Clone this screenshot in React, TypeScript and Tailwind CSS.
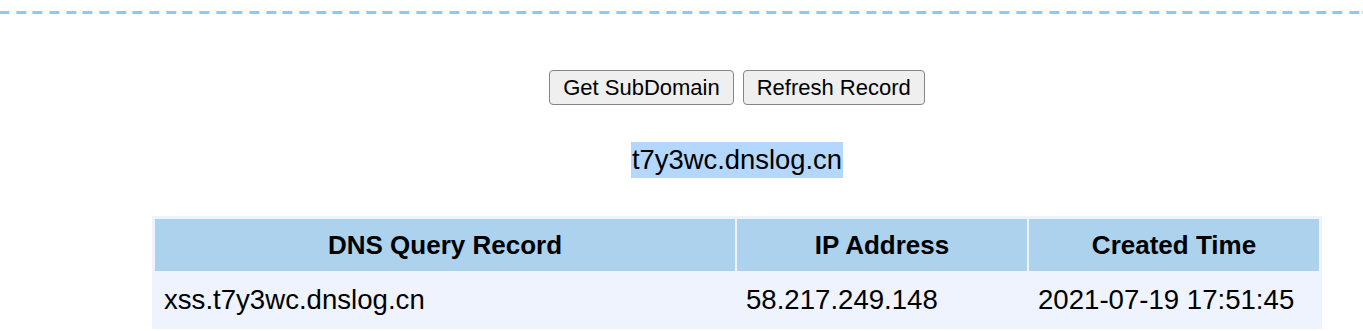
export default function App() {
  const records = [
    { domain: 'xss.t7y3wc.dnslog.cn', ip: '58.217.249.148', time: '2021-07-19 17:51:45' },
  ]

  return (
    <div className="w-[1363px] h-[331px] bg-white text-black font-['Liberation_Sans',Arial,sans-serif] overflow-hidden">
      {/* dashed divider */}
      <div className="mt-[11px] h-[3px] w-full bg-[repeating-linear-gradient(90deg,#88cbf6_0_10px,transparent_10px_16.667px)] bg-position-[-0.67px_0]" />

      <div className="ml-[152px] w-[1170px] flex flex-col items-center">
        <div className="mt-[56px] flex gap-[9px]">
          <button className="h-[35px] px-[13px] text-[22px] leading-none bg-[#efefef] border border-[#858585] rounded-[4px]">
            Get SubDomain
          </button>
          <button className="h-[35px] px-[13px] text-[22px] leading-none bg-[#efefef] border border-[#858585] rounded-[4px]">
            Refresh Record
          </button>
        </div>

        <div className="mt-[37px] h-[36px]">
          <span className="inline-block px-[1px] text-[27.4px] leading-[36px] bg-[#b4d7fd]">t7y3wc.dnslog.cn</span>
        </div>

        <table className="mt-[38px] w-[1170px] table-fixed border-separate border-spacing-[2px] border border-[#eef3fd] bg-[#eef3fd]">
          <colgroup>
            <col className="w-[580px]" />
            <col className="w-[290px]" />
            <col className="w-[290px]" />
          </colgroup>
          <thead>
            <tr>
              <th className="h-[52px] p-0 text-[26px] font-bold text-center bg-[#acd2ee]">DNS Query Record</th>
              <th className="h-[52px] p-0 text-[26px] font-bold text-center bg-[#acd2ee]">IP Address</th>
              <th className="h-[52px] p-0 text-[26px] font-bold text-center bg-[#acd2ee]">Created Time</th>
            </tr>
          </thead>
          <tbody>
            {records.map((r) => (
              <tr key={r.domain}>
                <td className="h-[53px] pl-[9px] pr-[4px] text-[27.6px] bg-[#eef3fd]">{r.domain}</td>
                <td className="h-[53px] pl-[9px] pr-[4px] text-[27.6px] bg-[#eef3fd]">{r.ip}</td>
                <td className="h-[53px] pl-[9px] pr-[4px] text-[27.6px] bg-[#eef3fd] whitespace-nowrap">{r.time}</td>
              </tr>
            ))}
          </tbody>
        </table>
      </div>
    </div>
  )
}
